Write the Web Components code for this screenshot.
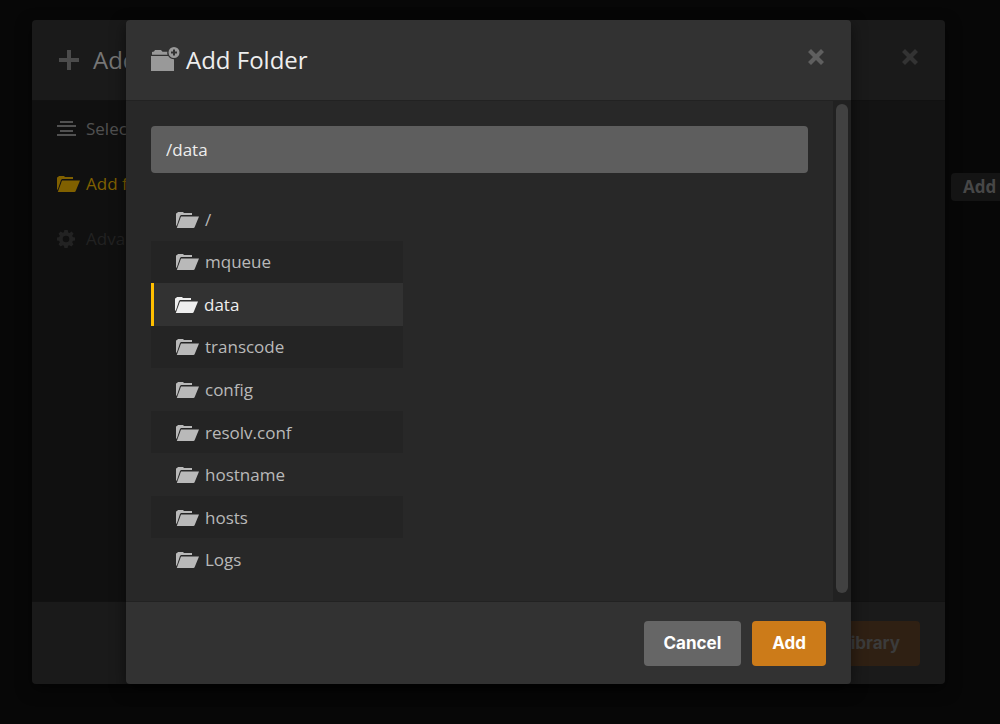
<!DOCTYPE html>
<html lang="en">
<head>
<meta charset="utf-8">
<title>Add Folder</title>
<style>
    body {
        margin: 0;
        background: #070707;
        color: #b9b9b9;
        font: 17px/24px "Open Sans", "Noto Sans", sans-serif;
    }
</style>
</head>
<body>
<media-page>
    <modal-dialog class="behind" slot="behind" heading="Add" icon="plus">
        <step-nav slot="body">
            <nav-step icon="lines">Select</nav-step>
            <nav-step icon="folder" state="active">Add folders</nav-step>
            <nav-step icon="gear" state="disabled">Advanced</nav-step>
        </step-nav>
        <action-button slot="footer" kind="dimmed">Add Library</action-button>
    </modal-dialog>

    <modal-dialog class="front" slot="front" heading="Add Folder" icon="folder-plus" scrollable>
        <folder-browser slot="body" path="/data">
            <folder-item>/</folder-item>
            <folder-item>mqueue</folder-item>
            <folder-item selected>data</folder-item>
            <folder-item>transcode</folder-item>
            <folder-item>config</folder-item>
            <folder-item>resolv.conf</folder-item>
            <folder-item>hostname</folder-item>
            <folder-item>hosts</folder-item>
            <folder-item>Logs</folder-item>
        </folder-browser>
        <action-button slot="footer">Cancel</action-button>
        <action-button slot="footer" kind="primary">Add</action-button>
    </modal-dialog>
</media-page>

<script>
const ICONS = {
    'folder': {
        size: [23, 16],
        body: '<path d="M0 14V2Q0 1 1 1L2 0H7L8 1H16V3H5L4 4L1 13Z"/><path d="M5 4.6H23L18.6 15.2Q18.2 16 17.5 16H.8Z"/>'
    },
    'folder-plus': {
        size: [29, 24],
        body: '<path d="M0 9H17.2Q19.5 12.2 23 12.2V24H0Z"/><path d="M1 7.7V5L3 4.5L4 3H10L11.5 4.7H16.3Q16 6.2 16.5 7.7Z"/>' +
            '<path fill-rule="evenodd" d="M23 0A5.5 5.5 0 1 1 23 11A5.5 5.5 0 1 1 23 0ZM22 2.5V4.5H20V6.5H22V8.5H24V6.5H26V4.5H24V2.5Z"/>'
    },
    'plus': {
        size: [20, 20],
        body: '<path d="M8 0H12V8H20V12H12V20H8V12H0V8H8Z"/>'
    },
    'lines': {
        size: [19, 15],
        body: '<path d="M3 0H16V2H3ZM0 4H19V6H0ZM3 9H16V11H3ZM0 13H19V15H0Z"/>'
    },
    'gear': {
        size: [18, 18],
        body: '<path fill-rule="evenodd" d="M7.3 0H10.7L11.2 2.5L12.5 3L14.6 1.6L16.6 3.8L15.2 5.8L15.7 7L18 7.4V10.6L15.7 11L15.2 12.3L16.5 14.3L14.3 16.5L12.3 15.2L11.1 15.7L10.6 18H7.4L6.9 15.7L5.7 15.2L3.7 16.5L1.5 14.3L2.8 12.3L2.3 11L0 10.6V7.4L2.3 7L2.8 5.8L1.5 3.7L3.7 1.5L5.7 2.8L6.9 2.3ZM9 5.7A3.3 3.3 0 1 0 9 12.3A3.3 3.3 0 1 0 9 5.7Z"/>'
    },
    'close': {
        size: [16, 16],
        body: '<path d="M3 0L8 5L13 0L16 3L11 8L16 13L13 16L8 11L3 16L0 13L5 8L0 3Z"/>'
    }
};

function icon(name) {
    const { size: [w, h], body } = ICONS[name];
    return `<svg width="${w}" height="${h}" viewBox="0 0 ${w} ${h}" fill="currentColor" aria-hidden="true">${body}</svg>`;
}

// The dimmed page, with both dialogs stacked in one grid cell
class MediaPage extends HTMLElement {
    constructor() {
        super();
        this.attachShadow({ mode: 'open' });
        this.shadowRoot.innerHTML = `
            <style>
                :host {
                    display: grid;
                    position: relative;
                    box-sizing: border-box;
                    min-height: 100vh;
                    padding: 20px 55px 40px 32px;
                    overflow: hidden;
                }
                ::slotted(modal-dialog) {
                    grid-area: 1 / 1;
                }
                ::slotted(.behind) {
                    --header: #1a1a1a;
                    --body: #131313;
                    --line: #111;
                    --title: #767676;
                    --icon: #4b4b4b;
                    --close: #333;
                }
                ::slotted(.front) {
                    z-index: 1;
                    margin: 0 94px;
                }
                /* page button that sticks out beside the dialogs */
                .page-button {
                    position: absolute;
                    top: 173px;
                    left: calc(100% - 49px);
                    padding: 2px 12px;
                    border: 0;
                    border-radius: 4px;
                    background: #141414;
                    color: #474747;
                    font: bold 17px/24px "Open Sans", sans-serif;
                }
            </style>
            <button class="page-button" type="button">Add</button>
            <slot name="behind"></slot>
            <slot name="front"></slot>
        `;
    }
}

class ModalDialog extends HTMLElement {
    constructor() {
        super();
        this.attachShadow({ mode: 'open' });
    }

    connectedCallback() {
        const scrollbar = this.hasAttribute('scrollable') ? '<div class="track"><div class="thumb"></div></div>' : '';
        this.shadowRoot.innerHTML = `
            <style>
                :host {
                    display: flex;
                    flex-direction: column;
                    border-radius: 4px;
                    background: var(--header, #323232);
                    box-shadow: 0 5px 15px rgba(0, 0, 0, 0.5);
                    overflow: hidden;
                }
                header {
                    display: flex;
                    align-items: center;
                    height: 80px;
                    padding: 0 25px;
                }
                .icon {
                    display: flex;
                    justify-content: center;
                    min-width: 28px;
                    margin-right: 6px;
                    padding-bottom: 2px;
                    color: var(--icon, #999);
                }
                :host(.behind) .icon {
                    min-width: 24px;
                    margin-right: 12px;
                    padding: 0;
                }
                h1 {
                    flex: 1;
                    margin: 0;
                    color: var(--title, #eee);
                    font-size: 24px;
                    font-weight: 400;
                    line-height: 32px;
                }
                .close {
                    display: flex;
                    padding: 0 2px 6px;
                    border: 0;
                    background: none;
                    color: var(--close, #5f5f5f);
                }
                main {
                    display: flex;
                    flex: 1;
                    border: 1px solid var(--line, #222);
                    border-width: 1px 0;
                    background: var(--body, #282828);
                }
                ::slotted([slot="body"]) {
                    flex: 1;
                }
                .track {
                    display: flex;
                    padding: 3px 3px 8px;
                    background: #212121;
                }
                .thumb {
                    width: 12px;
                    border-radius: 6px;
                    background: #414141;
                }
                footer {
                    display: flex;
                    justify-content: flex-end;
                    gap: 11px;
                    padding: 19px 25px 18px;
                }
            </style>
            <header>
                <span class="icon">${icon(this.getAttribute('icon'))}</span>
                <h1>${this.getAttribute('heading')}</h1>
                <button class="close" type="button" aria-label="Close">${icon('close')}</button>
            </header>
            <main><slot name="body"></slot>${scrollbar}</main>
            <footer><slot name="footer"></slot></footer>
        `;
    }
}

class StepNav extends HTMLElement {
    constructor() {
        super();
        this.attachShadow({ mode: 'open' });
        this.shadowRoot.innerHTML = `
            <style>
                :host { display: block; }
                nav {
                    display: flex;
                    flex-direction: column;
                    width: 225px;
                    height: 100%;
                    background: #101010;
                }
            </style>
            <nav><slot></slot></nav>
        `;
    }
}

class NavStep extends HTMLElement {
    constructor() {
        super();
        this.attachShadow({ mode: 'open' });
    }

    connectedCallback() {
        this.shadowRoot.innerHTML = `
            <style>
                :host {
                    display: block;
                    color: #515151;
                }
                :host([state="active"]) { color: #806000; }
                :host([state="disabled"]) { color: #222; }
                a {
                    display: flex;
                    align-items: center;
                    gap: 6px;
                    height: 55px;
                    padding: 0 25px;
                    color: inherit;
                    text-decoration: none;
                }
                .icon {
                    display: flex;
                    width: 23px;
                }
            </style>
            <a href="#"><span class="icon">${icon(this.getAttribute('icon'))}</span><slot></slot></a>
        `;
    }
}

class FolderBrowser extends HTMLElement {
    constructor() {
        super();
        this.attachShadow({ mode: 'open' });
    }

    connectedCallback() {
        this.shadowRoot.innerHTML = `
            <style>
                :host {
                    display: flex;
                    flex-direction: column;
                    gap: 25px;
                    min-width: 0;
                    padding: 25px 25px 20px;
                }
                input {
                    box-sizing: border-box;
                    width: 100%;
                    height: 47px;
                    padding: 0 15px;
                    border: 0;
                    border-radius: 4px;
                    background: #5e5e5e;
                    color: #eee;
                    font: inherit;
                }
                .list {
                    display: grid;
                    flex: 1;
                    grid-auto-rows: 1fr;
                    width: 252px;
                }
                ::slotted(:nth-child(even)) { background: #242424; }
            </style>
            <input type="text" aria-label="Folder path" value="${this.getAttribute('path')}">
            <div class="list"><slot></slot></div>
        `;
    }
}

class FolderItem extends HTMLElement {
    constructor() {
        super();
        this.attachShadow({ mode: 'open' });
        this.shadowRoot.innerHTML = `
            <style>
                :host { display: grid; }
                :host([selected]) {
                    background: #323232;
                    border-left: 3px solid #ffbf00;
                    color: #eee;
                }
                a {
                    display: flex;
                    align-items: center;
                    gap: 6px;
                    padding: 1px 25px 0;
                    color: inherit;
                    text-decoration: none;
                }
                :host([selected]) a { padding-left: 21px; }
            </style>
            <a href="#">${icon('folder')}<span><slot></slot></span></a>
        `;
    }
}

class ActionButton extends HTMLElement {
    constructor() {
        super();
        this.attachShadow({ mode: 'open' });
        this.shadowRoot.innerHTML = `
            <style>
                :host { display: block; }
                button {
                    display: block;
                    height: 45px;
                    padding: 0 20px 2px;
                    border: 0;
                    border-radius: 4px;
                    background: #666;
                    color: #fff;
                    font: bold 17px/24px Inter, sans-serif;
                }
                :host([kind="primary"]) button { background: #cc7b19; }
                :host([kind="dimmed"]) button {
                    background: #2f2013;
                    color: #3b3b3b;
                }
            </style>
            <button type="button"><slot></slot></button>
        `;
    }
}

customElements.define('media-page', MediaPage);
customElements.define('modal-dialog', ModalDialog);
customElements.define('step-nav', StepNav);
customElements.define('nav-step', NavStep);
customElements.define('folder-browser', FolderBrowser);
customElements.define('folder-item', FolderItem);
customElements.define('action-button', ActionButton);
</script>
</body>
</html>
